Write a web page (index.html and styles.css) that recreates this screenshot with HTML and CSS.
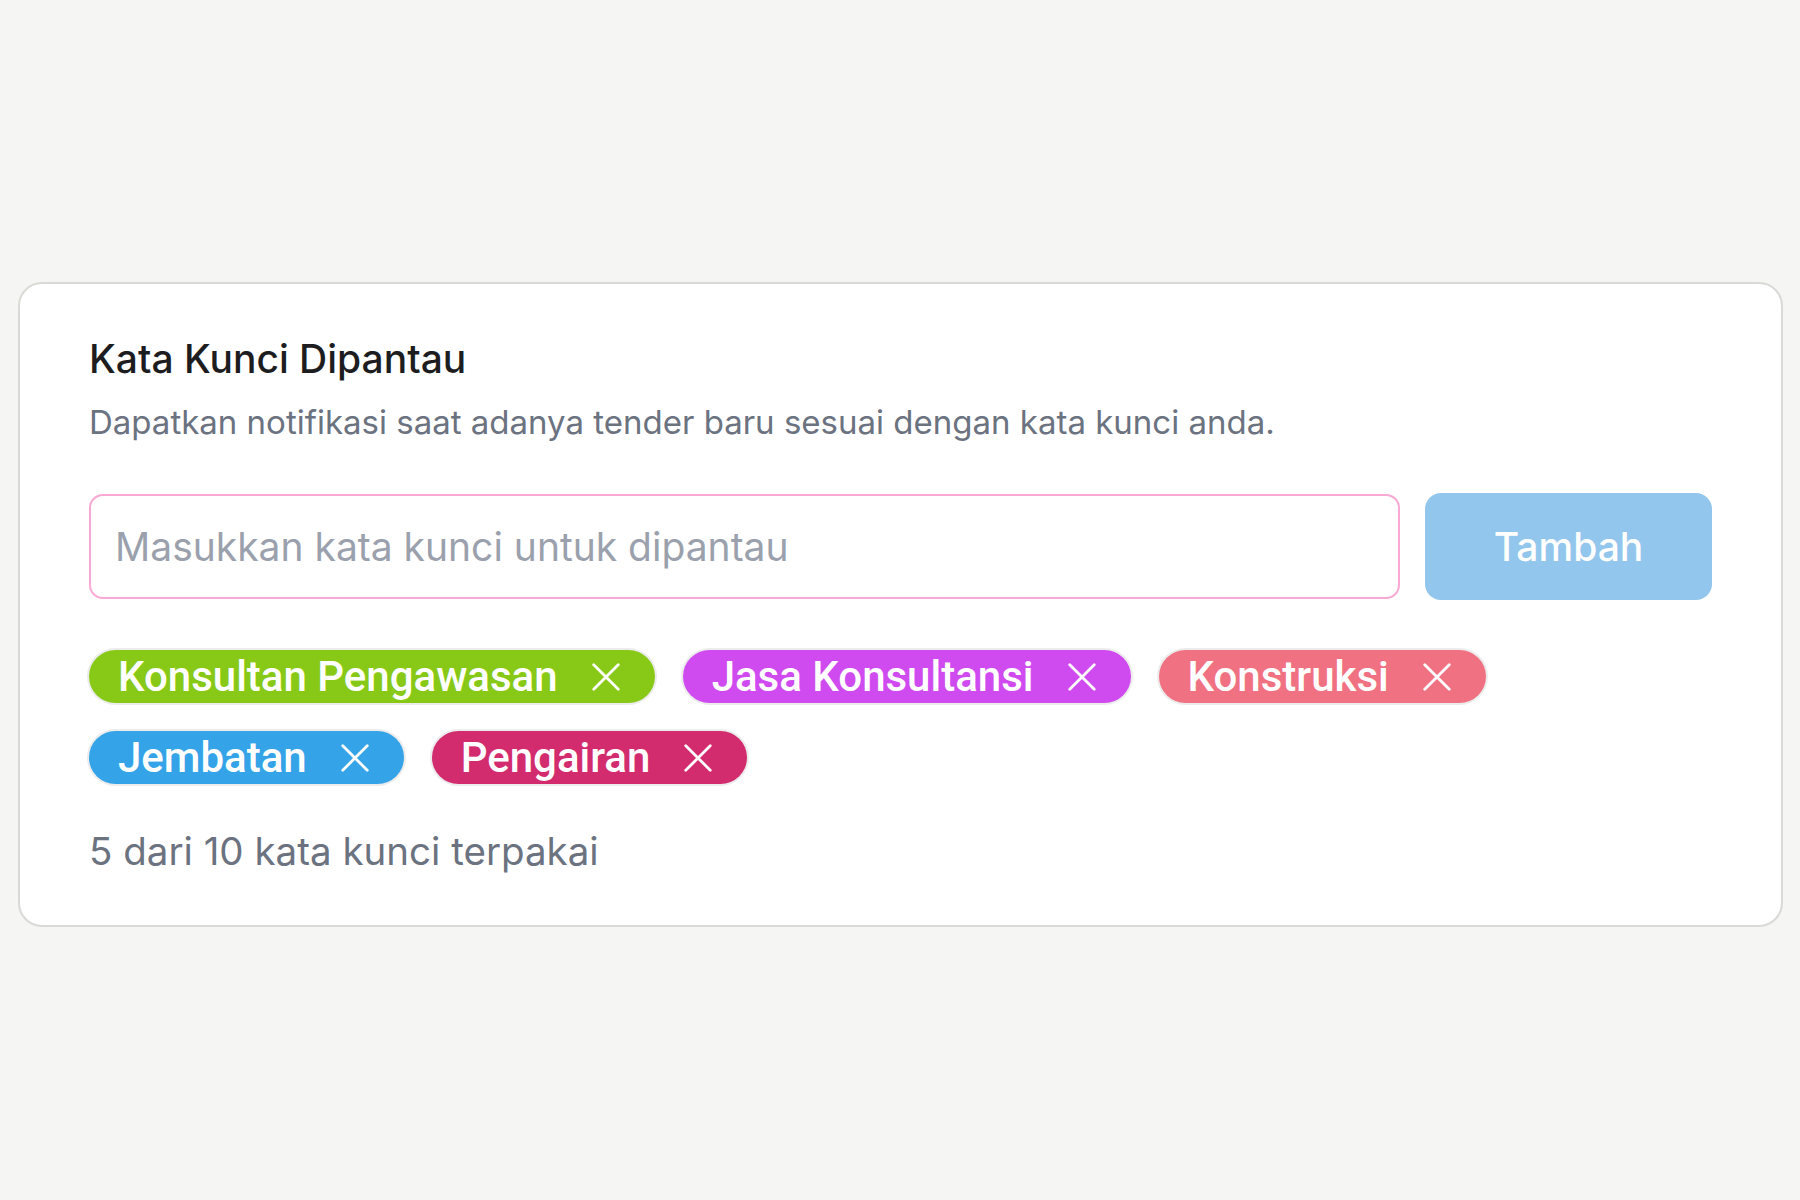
FILE: index.html
```html
<!DOCTYPE html>
<html lang="id">
<head>
<meta charset="UTF-8">
<title>Kata Kunci Dipantau</title>
<meta name="viewport" content="width=device-width, initial-scale=1.0">
<link rel="stylesheet" href="styles.css">
</head>
<body>
<div class="page">
  <section class="card">
    <h2 class="card-title">Kata Kunci Dipantau</h2>
    <p class="card-desc">Dapatkan notifikasi saat adanya tender baru sesuai dengan kata kunci anda.</p>

    <form class="keyword-form" onsubmit="return false;">
      <input class="keyword-input" type="text" placeholder="Masukkan kata kunci untuk dipantau">
      <button class="add-btn" type="submit">Tambah</button>
    </form>

    <div class="tags">
      <span class="tag tag-green">Konsultan Pengawasan
        <button class="tag-remove" type="button"><svg viewBox="0 0 24 24"><path d="M1.5 1.5L22.5 22.5M22.5 1.5L1.5 22.5"/></svg></button>
      </span>
      <span class="tag tag-purple">Jasa Konsultansi
        <button class="tag-remove" type="button"><svg viewBox="0 0 24 24"><path d="M1.5 1.5L22.5 22.5M22.5 1.5L1.5 22.5"/></svg></button>
      </span>
      <span class="tag tag-coral">Konstruksi
        <button class="tag-remove" type="button"><svg viewBox="0 0 24 24"><path d="M1.5 1.5L22.5 22.5M22.5 1.5L1.5 22.5"/></svg></button>
      </span>
      <span class="tag tag-blue">Jembatan
        <button class="tag-remove" type="button"><svg viewBox="0 0 24 24"><path d="M1.5 1.5L22.5 22.5M22.5 1.5L1.5 22.5"/></svg></button>
      </span>
      <span class="tag tag-pink">Pengairan
        <button class="tag-remove" type="button"><svg viewBox="0 0 24 24"><path d="M1.5 1.5L22.5 22.5M22.5 1.5L1.5 22.5"/></svg></button>
      </span>
    </div>

    <p class="usage">5 dari 10 kata kunci terpakai</p>
  </section>
</div>
</body>
</html>
```

FILE: styles.css
```css
body, html {
  margin: 0;
  height: 100%;
  background: #f5f5f3;
  font-family: Inter, "Liberation Sans", sans-serif;
  box-sizing: border-box;
}

.page {
  padding: 282px 17px 0 18px;
}

.card {
  background: #fff;
  border: 2px solid #d9d9d5;
  border-radius: 24px;
  padding: 53px 69px 51px;
}

.card-title {
  margin: 0;
  font-size: 39px;
  line-height: 44px;
  font-weight: 500;
  color: #1d1d1f;
}

.card-desc {
  margin: 21px 0 0;
  font-size: 33px;
  line-height: 40px;
  font-weight: 400;
  color: #6b7280;
}

.keyword-form {
  display: flex;
  gap: 25px;
  margin-top: 52px;
}

.keyword-input {
  flex: 1;
  height: 105px;
  box-sizing: border-box;
  border: 2px solid #f9a8d4;
  border-radius: 14px;
  padding: 0 24px;
  font-family: Inter, "Liberation Sans", sans-serif;
  font-size: 39px;
  color: #333;
  outline: none;
}
.keyword-input::placeholder {
  color: #9aa1ad;
}

.add-btn {
  width: 287px;
  height: 107px;
  margin-top: -1px;
  border: 0;
  border-radius: 16px;
  background: #93c6ec;
  color: #fff;
  font-family: Inter, "Liberation Sans", sans-serif;
  font-size: 39px;
  font-weight: 500;
}

.tags {
  display: flex;
  flex-wrap: wrap;
  gap: 28px;
  margin-top: 50px;
}

.tag {
  display: inline-flex;
  align-items: center;
  gap: 34px;
  height: 53px;
  box-sizing: border-box;
  padding: 0 35px 0 29px;
  border-radius: 27px;
  box-shadow: 0 0 0 2px #ececec;
  color: #fff;
  font-family: Roboto, "Liberation Sans", sans-serif;
  font-size: 42px;
  font-weight: 500;
  white-space: nowrap;
}

.tag-remove {
  display: flex;
  padding: 0;
  border: 0;
  background: none;
  cursor: pointer;
}
.tag-remove svg {
  width: 28px;
  height: 28px;
  fill: none;
  stroke: #fff;
  stroke-width: 2.4;
  stroke-linecap: round;
}

.tag-green { background: #88c918; }
.tag-purple { background: #cf4bef; }
.tag-coral { background: #f07282; }
.tag-blue { background: #34a3e8; }
.tag-pink { background: #d22c6e; }

.usage {
  margin: 44px 0 0;
  font-size: 38.5px;
  line-height: 46px;
  color: #6b7280;
}
```
